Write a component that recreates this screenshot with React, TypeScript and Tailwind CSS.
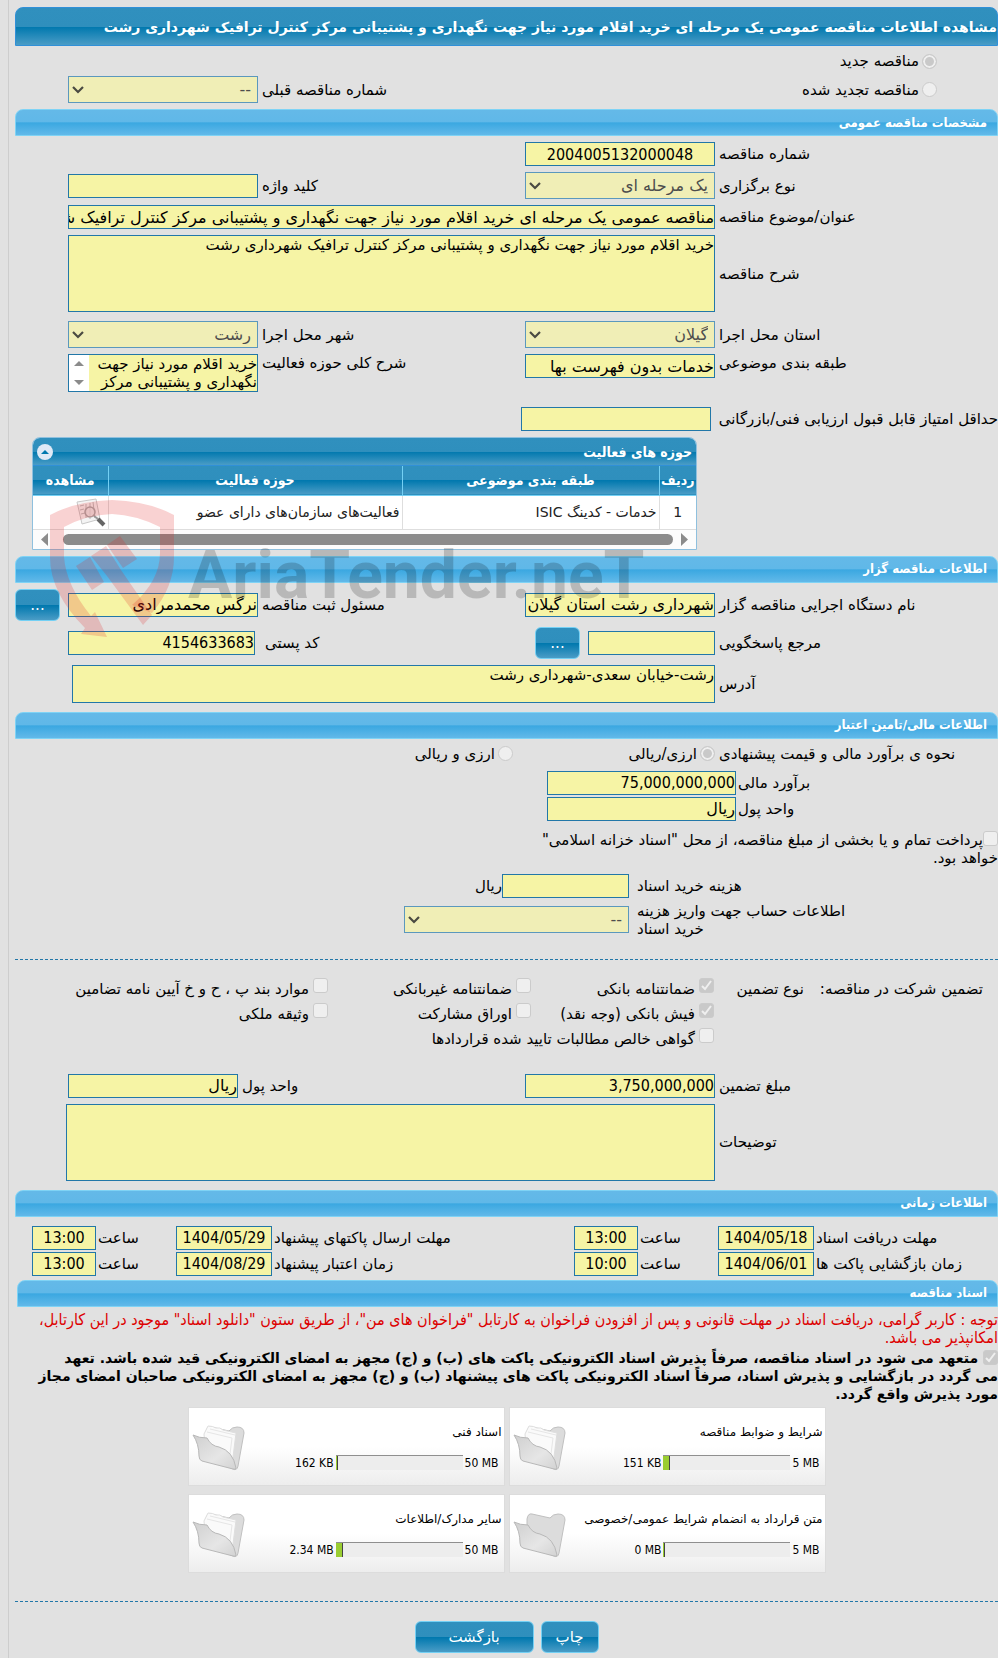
import React, { useId } from "react"
import { clsx } from "clsx"

const SUBJECT = "خرید اقلام مورد نیاز جهت نگهداری و پشتیبانی مرکز کنترل ترافیک شهرداری رشت"

const box = "block w-full border border-[#2277a8] bg-[#f6f4a5] text-black outline-none"
const condensed = "font-['DejaVu_Sans_Condensed','DejaVu_Sans',sans-serif]"
const formRow = "grid grid-cols-[279px_190px_1fr_190px] gap-x-1 pl-[53px]"
const wideRow = "grid grid-cols-[279px_1fr] gap-x-1 items-center"
const timeRow = "grid grid-cols-[182px_96px_76px_64px_1fr_96px_76px_64px] gap-x-0.5 pl-[17px] items-center"
const darkGradient = "bg-[linear-gradient(#3090be_0%,#2f8fbd_50%,#0078ae_51%,#4a9cc6_100%)]"

const files = [
  { title: "شرایط و ضوابط مناقصه", size: "151 KB", max: "5 MB", percent: 4, empty: false },
  { title: "اسناد فنی", size: "162 KB", max: "50 MB", percent: 1, empty: false },
  { title: "متن قرارداد به انضمام شرایط عمومی/خصوصی", size: "0 MB", max: "5 MB", percent: 0, empty: true },
  { title: "سایر مدارک/اطلاعات", size: "2.34 MB", max: "50 MB", percent: 5, empty: false },
]

function SectionBar({ children, className }: { children: React.ReactNode; className?: string }) {
  return (
    <h2
      className={clsx(
        "flex h-[27px] items-center rounded-t-lg border border-[#7fd3f5] bg-[linear-gradient(#64b9e8_0%,#60b8e8_46%,#3ba8e1_52%,#62b9e9_100%)] pr-2.5 text-[13px] font-bold text-white",
        condensed,
        className
      )}
    >
      {children}
    </h2>
  )
}

type FieldProps = {
  label: string
  value?: string
  className?: string
  labelClassName?: string
}

// Label and input come out as two siblings, so that the grid of the row places both
function TextField({ label, value = "", className, labelClassName }: FieldProps) {
  const id = useId()
  const numeric = /^\d/.test(value)
  return (
    <>
      <label htmlFor={id} className={clsx("text-left", labelClassName)}>{label}</label>
      <input
        id={id}
        type="text"
        readOnly
        value={value}
        className={clsx(box, "h-6 text-[16px]", numeric && condensed, className)}
      />
    </>
  )
}

function SelectField({ label, value, labelClassName }: FieldProps) {
  const id = useId()
  return (
    <>
      <label htmlFor={id} className={clsx("text-left", labelClassName)}>{label}</label>
      <div className="relative">
        <select
          id={id}
          disabled
          className="block h-[27px] w-full appearance-none border border-[#5b98bd] bg-[#f0eeb6] pr-1.5 text-[16px] text-[#4d4d4d] opacity-100"
        >
          <option>{value}</option>
        </select>
        <svg className="pointer-events-none absolute top-2.5 left-1" width="12" height="8" viewBox="0 0 12 8" fill="none" stroke="#4a4a42" strokeWidth="2.2">
          <path d="M1 1l5 5 5-5" />
        </svg>
      </div>
    </>
  )
}

function Radio({ label, name, checked = false }: { label: string; name: string; checked?: boolean }) {
  return (
    <label className="flex items-center gap-[3px]">
      <input
        type="radio"
        name={name}
        disabled
        defaultChecked={checked}
        className="size-[15px] shrink-0 appearance-none rounded-full border border-[#cbcbcb] bg-[#efefef] checked:bg-[#c9c9c9] checked:shadow-[inset_0_0_0_2px_#efefef]"
      />
      {label}
    </label>
  )
}

function CheckBox({ id, checked = false }: { id?: string; checked?: boolean }) {
  return (
    <span className="relative inline-block size-[15px] shrink-0 align-text-top">
      <input
        id={id}
        type="checkbox"
        disabled
        defaultChecked={checked}
        className="block size-[15px] appearance-none rounded-[3px] border border-[#cbcbcb] bg-[#efefef] checked:bg-[#c9c9c9]"
      />
      {checked && (
        <svg className="pointer-events-none absolute inset-0" width="15" height="15" viewBox="0 0 15 15" fill="none" stroke="#efefef" strokeWidth="2">
          <path d="M3 8l3 3 6-8" />
        </svg>
      )}
    </span>
  )
}

function CheckItem({ label, checked }: { label: string; checked?: boolean }) {
  const id = useId()
  return (
    <div className="flex items-start gap-1">
      <CheckBox id={id} checked={checked} />
      <label htmlFor={id} className="pt-0.5 whitespace-nowrap">{label}</label>
    </div>
  )
}

function BlueButton({ children, className }: { children: React.ReactNode; className?: string }) {
  return (
    <button
      type="button"
      className={clsx("h-8 rounded-md border border-[#74d0f4] text-[15px] text-white", darkGradient, className)}
    >
      {children}
    </button>
  )
}

function Folder({ empty }: { empty: boolean }) {
  return (
    <svg width="54" height="48" viewBox="0 0 54 48">
      <defs>
        <linearGradient id="folder-front" x1="0" y1="0" x2="1" y2="1">
          <stop offset="0" stopColor="#cfcfcf" />
          <stop offset="0.6" stopColor="#e6e6e6" />
          <stop offset="1" stopColor="#d2d2d2" />
        </linearGradient>
      </defs>
      <path d="M14 8q1-6 5-5l18 4q3-4 8-4 7 0 7 6l-6 33q-1 5-5 3L14 34z" fill="#dcdcdc" stroke="#c0c0c0" />
      {!empty && (
        <>
          <path d="M12 10l4-8q5 0 8 2 4-1 7 2l13 3-4 32-26-8z" fill="#fafafa" stroke="#dedede" />
          <path d="M15 8l25 6-3 24M18 5l25 6" fill="none" stroke="#e6e6e6" />
        </>
      )}
      <path d="M1 11q6 3 14 3 4 8 12 9 14 4 17 21 0 2-3 1L10 37q-3-1-3-5Q7 20 1 11z" fill="url(#folder-front)" stroke="#b8b8b8" />
    </svg>
  )
}

function FileCard({ title, size, max, percent, empty }: (typeof files)[number]) {
  return (
    <div className="relative h-[79px] border border-[#dcdcdc] bg-[linear-gradient(#ffffff_0%,#ffffff_50%,#ededed_100%)] pt-4 pr-0.5 text-[12px]">
      <h3 className="leading-4 whitespace-nowrap">{title}</h3>
      <div className={clsx("mt-3.5 flex items-center gap-0.5 pr-[3px]", condensed)}>
        <span dir="ltr">{max}</span>
        <div className="flex h-[15px] w-[127px] justify-end border-t border-[#8f8f8f] bg-[#ededed]">
          <div className="border-r border-[#444] bg-[#9acd32]" style={{ width: `${percent + 1}%` }} />
        </div>
        <span dir="ltr">{size}</span>
      </div>
      <div className="absolute top-4 left-[3px]">
        <Folder empty={empty} />
      </div>
    </div>
  )
}

function ActivityTable() {
  const th = "border-l border-[#74d0f4] px-1 text-center font-bold last:border-l-0"
  const td = "border-l border-[#dedede] px-0.5 last:border-l-0"
  return (
    <div className="mt-1.5 mr-[301px] ml-[17px] overflow-hidden rounded-t-lg border border-[#8fc0de] bg-white">
      <div className={clsx("flex h-7 items-center justify-between border-b border-[#3090d8] px-1 text-[14px] text-white", darkGradient, condensed)}>
        <h3 className="font-bold">حوزه های فعالیت</h3>
        <button type="button" aria-label="بستن" className="flex size-4 items-center justify-center rounded-full bg-[#dfe9f6]">
          <svg width="8" height="4" viewBox="0 0 8 4" fill="#0078ae"><path d="M0 4l4-4 4 4z" /></svg>
        </button>
      </div>
      <table className="w-full table-fixed border-collapse">
        <colgroup>
          <col className="w-[37px]" />
          <col className="w-[257px]" />
          <col />
          <col className="w-[75px]" />
        </colgroup>
        <thead>
          <tr className={clsx("h-[29px] border-b border-[#74d0f4] text-[14px] text-white", darkGradient, condensed)}>
            <th className="border-l border-[#74d0f4] text-center font-bold">ردیف</th>
            <th className={th}>طبقه بندی موضوعی</th>
            <th className={th}>حوزه فعالیت</th>
            <th className={th}>مشاهده</th>
          </tr>
        </thead>
        <tbody>
          <tr className="h-[34px] border-b border-[#dedede] text-[14px] text-[#222]">
            <td className={clsx(td, "text-center")}>1</td>
            <td className={td}>خدمات - کدینگ ISIC</td>
            <td className={td}>فعالیت‌های سازمان‌های دارای عضو</td>
            <td className={td}>
              <svg width="30" height="29" viewBox="0 0 30 29" fill="none">
                <path d="M1 4l19-3 4 20-18 5z" fill="#f4f4f4" stroke="#c8c8c8" />
                <path d="M4 8l4-1M4 12l4-1M5 16l4-1M10 6v14M14 5v16M17 4l2 16" stroke="#bbb" />
                <circle cx="14" cy="14" r="5" fill="#e8e8e8" fillOpacity="0.7" stroke="#aaa" strokeWidth="1.5" />
                <path d="M18 18l4 3" stroke="#999" strokeWidth="2" />
                <path d="M22 21l6 6" stroke="#666" strokeWidth="4" />
              </svg>
            </td>
          </tr>
        </tbody>
      </table>
      <div className="flex h-[19px] items-center justify-between bg-[#fcfcfc] px-[7px]">
        <svg width="8" height="13" viewBox="0 0 8 13" fill="#8b8b8b"><path d="M0 0l7 6.5-7 6.5z" /></svg>
        <div className="mr-2 ml-[15px] h-[11px] flex-1 rounded-full bg-[#8b8b8b]" />
        <svg width="8" height="13" viewBox="0 0 8 13" fill="#8b8b8b"><path d="M8 0L1 6.5 8 13z" /></svg>
      </div>
    </div>
  )
}

function Watermark() {
  return (
    <div dir="ltr" className="pointer-events-none absolute top-[495px] left-12">
      <svg width="620" height="145" viewBox="0 0 620 145">
        <g fill="#e02020" fillOpacity="0.2">
          <path
            fillRule="evenodd"
            d="M2 20Q28 6 64 5Q100 6 126 20V62Q126 92 104 118L84 110Q112 86 112 58V32Q88 20 64 19Q38 20 16 32V62Q18 90 43 121L47 117 59 142 33 139 37 133Q2 98 2 62z"
          />
          <path d="M28 71l14-9 14 25-12 8z" />
          <path d="M43 61l15-10 15 24 31 45-9 10-36-49z" />
          <path d="M59 50l13-9 17 23-14 9z" />
        </g>
        <text x="140" y="103" fill="#000" fillOpacity="0.18" fontSize="66" fontWeight="700" fontFamily="Roboto, 'Liberation Sans', sans-serif">
          AriaTender.neT
        </text>
      </svg>
    </div>
  )
}

export default function App() {
  const descriptionId = useId()
  const scopeId = useId()
  const addressId = useId()
  const treasuryId = useId()
  const commentsId = useId()
  const pledgeId = useId()

  return (
    <div dir="rtl" className="relative min-h-screen overflow-x-hidden bg-[#e1e1e1] pl-2 font-['DejaVu_Sans',sans-serif] text-[15px] leading-[18px] text-black">
      <main className="min-h-screen border-l border-[#cdcdcd] pt-[7px] pb-[5px] pl-1.5">
        <h1 className={clsx("flex h-[39px] items-center rounded-t-lg border border-[#3090d8] text-[14px] font-bold whitespace-nowrap text-white", darkGradient)}>
          مشاهده اطلاعات مناقصه عمومی یک مرحله ای {SUBJECT}
        </h1>

        <div className="flex flex-col pt-1.5 pr-[61px]">
          <Radio name="kind" label="مناقصه جدید" checked />
        </div>
        <div className="mt-1.5 grid grid-cols-[1fr_1fr_190px] items-center gap-x-1 pr-[61px] pl-[53px]">
          <Radio name="kind" label="مناقصه تجدید شده" />
          <SelectField label="شماره مناقصه قبلی" value="--" />
        </div>

        <SectionBar className="mt-1.5">مشخصات مناقصه عمومی</SectionBar>
        <div className="flex flex-col gap-1.5 pt-1.5">
          <div className={clsx(formRow, "items-center")}>
            <TextField label="شماره مناقصه" value="2004005132000048" className="text-center" />
          </div>
          <div className={clsx(formRow, "items-center")}>
            <SelectField label="نوع برگزاری" value="یک مرحله ای" />
            <TextField label="کلید واژه" />
          </div>
          <div className={clsx(wideRow, "pl-[53px]")}>
            <TextField label="عنوان/موضوع مناقصه" value={`مناقصه عمومی یک مرحله ای ${SUBJECT}`} />
          </div>
          <div className={clsx(wideRow, "pl-[53px]")}>
            <label htmlFor={descriptionId} className="text-left">شرح مناقصه</label>
            <textarea id={descriptionId} readOnly value={SUBJECT} className={clsx(box, "h-[77px] resize-none")} />
          </div>
          <div className={clsx(formRow, "items-center pt-[3px]")}>
            <SelectField label="استان محل اجرا" value="گیلان" />
            <SelectField label="شهر محل اجرا" value="رشت" />
          </div>
          <div className={clsx(formRow, "items-start")}>
            <TextField label="طبقه بندی موضوعی" value="خدمات بدون فهرست بها" />
            <label htmlFor={scopeId} className="text-left">شرح کلی حوزه فعالیت</label>
            <div className="flex h-[38px] border border-[#2277a8] bg-[#f6f4a5]">
              <textarea id={scopeId} readOnly value={SUBJECT} className="block w-full resize-none overflow-hidden outline-none" />
              <div className="flex w-5 shrink-0 flex-col items-center justify-between bg-white py-1.5">
                <svg width="10" height="5" viewBox="0 0 10 5" fill="#8b8b8b"><path d="M0 5l5-5 5 5z" /></svg>
                <svg width="10" height="5" viewBox="0 0 10 5" fill="#8b8b8b"><path d="M0 0l5 5 5-5z" /></svg>
              </div>
            </div>
          </div>
          <div className="grid grid-cols-[279px_190px] items-center gap-x-2 pt-[9px]">
            <TextField label="حداقل امتیاز قابل قبول ارزیابی فنی/بازرگانی" labelClassName="whitespace-nowrap" />
          </div>
        </div>
        <ActivityTable />

        <SectionBar className="mt-1.5">اطلاعات مناقصه گزار</SectionBar>
        <div className="flex flex-col gap-1.5 pt-1.5">
          <div className="grid grid-cols-[279px_190px_1fr_190px_49px] items-center gap-x-1">
            <TextField label="نام دستگاه اجرایی مناقصه گزار" value="شهرداری رشت استان گیلان" />
            <TextField label="مسئول ثبت مناقصه" value="نرگس محمدمرادی" />
            <BlueButton className="w-[45px] justify-self-end">...</BlueButton>
          </div>
          <div className="grid grid-cols-[279px_127px_49px_1fr_187px] items-center gap-x-1 pl-[53px]">
            <TextField label="مرجع پاسخگویی" />
            <BlueButton className="w-[45px] justify-self-end">...</BlueButton>
            <TextField label="کد پستی" value="4154633683" labelClassName="ml-1.5" />
          </div>
          <div className={clsx(wideRow, "pl-[57px]")}>
            <label htmlFor={addressId} className="text-left">آدرس</label>
            <textarea id={addressId} readOnly value="رشت-خیابان سعدی-شهرداری رشت" className={clsx(box, "h-[38px] resize-none")} />
          </div>
        </div>

        <SectionBar className="mt-[9px]">اطلاعات مالی/تامین اعتبار</SectionBar>
        <div className="grid grid-cols-[279px_198px_1fr] items-center gap-x-1 pt-1.5">
          <span className="text-left">نحوه ی برآورد مالی و قیمت پیشنهادی</span>
          <Radio name="currency" label="ارزی/ریالی" checked />
          <Radio name="currency" label="ارزی و ریالی" />
        </div>
        <div className="mt-2 grid grid-cols-[260px_189px] items-center gap-x-0.5 gap-y-0.5">
          <TextField label="برآورد مالی" value="75,000,000,000" />
          <TextField label="واحد پول" value="ریال" />
        </div>
        <p className="mt-2.5 max-w-[470px]">
          <CheckBox id={treasuryId} />
          <label htmlFor={treasuryId}>
            پرداخت تمام و یا بخشی از مبلغ مناقصه، از محل "اسناد خزانه اسلامی" خواهد بود.
          </label>
        </p>
        <div className="mt-[7px] grid grid-cols-[361px_127px_1fr] items-center gap-x-2">
          <TextField label="هزینه خرید اسناد" />
          <span className="-mr-2">ریال</span>
        </div>
        <div className="mt-1 grid grid-cols-[361px_225px] items-center gap-x-2">
          <SelectField label="اطلاعات حساب جهت واریز هزینه خرید اسناد" value="--" labelClassName="mr-[140px]" />
        </div>

        <hr className="mt-[21px] border-t border-dashed border-[#2277a8]" />

        <div className="mt-[18px] flex pr-[15px]">
          <span className="w-[159px] pt-0.5 whitespace-nowrap">تضمین شرکت در مناقصه:</span>
          <span className="w-[110px] pt-0.5 pr-5">نوع تضمین</span>
          <div className="grid flex-1 grid-cols-[179px_199px_1fr] gap-x-1 gap-y-[5px]">
            <CheckItem label="ضمانتنامه بانکی" checked />
            <CheckItem label="ضمانتنامه غیربانکی" />
            <CheckItem label="موارد بند پ ، ح و خ آیین نامه تضامین" />
            <CheckItem label="فیش بانکی (وجه نقد)" checked />
            <CheckItem label="اوراق مشارکت" />
            <CheckItem label="وثیقه ملکی" />
            <div className="col-span-3">
              <CheckItem label="گواهی خالص مطالبات تایید شده قراردادها" />
            </div>
          </div>
        </div>

        <div className="mt-[26px] grid grid-cols-[279px_190px_1fr_170px] items-center gap-x-1 pl-[53px]">
          <TextField label="مبلغ تضمین" value="3,750,000,000" />
          <TextField label="واحد پول" value="ریال" />
        </div>
        <div className={clsx(wideRow, "mt-1.5 pl-[51px]")}>
          <label htmlFor={commentsId} className="text-left">توضیحات</label>
          <textarea id={commentsId} readOnly className={clsx(box, "h-[77px] resize-none")} />
        </div>

        <SectionBar className="mt-[9px]">اطلاعات زمانی</SectionBar>
        <div className="flex flex-col gap-0.5 pt-[9px]">
          <div className={timeRow}>
            <TextField label="مهلت دریافت اسناد" value="1404/05/18" className="text-center" />
            <TextField label="ساعت" value="13:00" className="text-center" />
            <TextField label="مهلت ارسال پاکتهای پیشنهاد" value="1404/05/29" className="text-center" />
            <TextField label="ساعت" value="13:00" className="text-center" />
          </div>
          <div className={timeRow}>
            <TextField label="زمان بازگشایی پاکت ها" value="1404/06/01" className="text-center" />
            <TextField label="ساعت" value="10:00" className="text-center" />
            <TextField label="زمان اعتبار پیشنهاد" value="1404/08/29" className="text-center" />
            <TextField label="ساعت" value="13:00" className="text-center" />
          </div>
        </div>

        <SectionBar className="mt-1 ml-0.5">اسناد مناقصه</SectionBar>
        <p className={clsx("mt-1 text-[16px] text-[#dd0000]", condensed)}>
          توجه : کاربر گرامی، دریافت اسناد در مهلت قانونی و پس از افزودن فراخوان به کارتابل "فراخوان های من"، از طریق ستون "دانلود اسناد" موجود در این کارتابل، امکانپذیر می باشد.
        </p>
        <p className="mt-0.5 text-[14px] font-bold">
          <CheckBox id={pledgeId} checked />{" "}
          <label htmlFor={pledgeId}>
            متعهد می شود در اسناد مناقصه، صرفاً پذیرش اسناد الکترونیکی پاکت های (ب) و (ج) مجهز به امضای الکترونیکی قید شده باشد. تعهد
            <br />
            می گردد در بازگشایی و پذیرش اسناد، صرفاً اسناد الکترونیکی پاکت های پیشنهاد (ب) و (ج) مجهز به امضای الکترونیکی صاحبان امضای مجاز
            <br />
            مورد پذیرش واقع گردد.
          </label>
        </p>

        <div className="mx-auto mt-1 grid max-w-[638px] grid-cols-2 gap-x-1 gap-y-2">
          {files.map((file) => (
            <FileCard key={file.title} {...file} />
          ))}
        </div>

        <hr className="mt-7 border-t border-dashed border-[#2277a8]" />
        <div className="mt-[19px] flex justify-center gap-[7px]">
          <BlueButton className="w-[58px]">چاپ</BlueButton>
          <BlueButton className="w-[119px]">بازگشت</BlueButton>
        </div>
      </main>
      <Watermark />
    </div>
  )
}
